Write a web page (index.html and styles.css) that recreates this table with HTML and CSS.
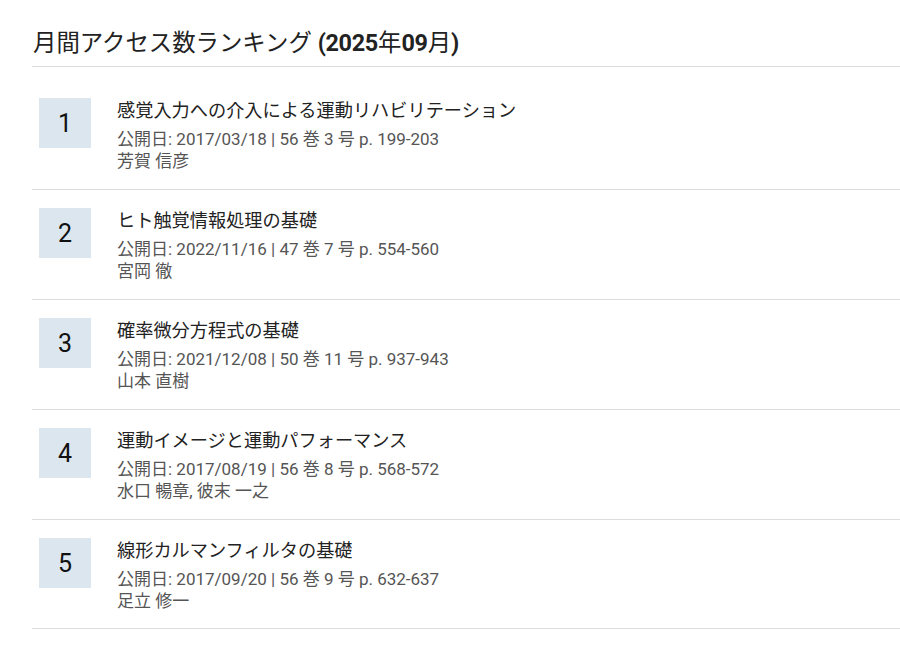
FILE: index.html
```html
<!DOCTYPE html>
<html lang="ja">
<head>
<meta charset="utf-8">
<link rel="stylesheet" href="styles.css">
</head>
<body>
<div class="page">
  <h2 class="heading">月間アクセス数ランキング <span class="b">(2025</span>年<span class="b">09</span>月<span class="b">)</span></h2>
  <ul class="ranking">
    <li class="item">
      <div class="rank">1</div>
      <div class="info">
        <div class="title">感覚入力への介入による運動リハビリテーション</div>
        <div class="meta">公開日: 2017/03/18 | 56 巻 3 号 p. 199-203</div>
        <div class="author">芳賀 信彦</div>
      </div>
    </li>
    <li class="item">
      <div class="rank">2</div>
      <div class="info">
        <div class="title">ヒト触覚情報処理の基礎</div>
        <div class="meta">公開日: 2022/11/16 | 47 巻 7 号 p. 554-560</div>
        <div class="author">宮岡 徹</div>
      </div>
    </li>
    <li class="item">
      <div class="rank">3</div>
      <div class="info">
        <div class="title">確率微分方程式の基礎</div>
        <div class="meta">公開日: 2021/12/08 | 50 巻 11 号 p. 937-943</div>
        <div class="author">山本 直樹</div>
      </div>
    </li>
    <li class="item">
      <div class="rank">4</div>
      <div class="info">
        <div class="title">運動イメージと運動パフォーマンス</div>
        <div class="meta">公開日: 2017/08/19 | 56 巻 8 号 p. 568-572</div>
        <div class="author">水口 暢章, 彼末 一之</div>
      </div>
    </li>
    <li class="item">
      <div class="rank">5</div>
      <div class="info">
        <div class="title">線形カルマンフィルタの基礎</div>
        <div class="meta">公開日: 2017/09/20 | 56 巻 9 号 p. 632-637</div>
        <div class="author">足立 修一</div>
      </div>
    </li>
  </ul>
</div>
</body>
</html>
```

FILE: styles.css
```css
html, body {
  margin: 0;
  padding: 0;
  background: #fff;
}
body {
  font-family: Roboto, "Noto Sans CJK JP", sans-serif;
  color: #222;
}
.page {
  padding: 0 0 0 32px;
}
.heading {
  margin: 0;
  padding: 28px 0 8px 1px;
  font-size: 23.4px;
  line-height: 30px;
  font-weight: 400;
  color: #222;
  border-bottom: 1px solid #dddddd;
}
.heading .b {
  font-weight: 700;
  letter-spacing: -0.3px;
}
.ranking {
  list-style: none;
  margin: 13px 0 0 0;
  padding: 0;
}
.item {
  display: flex;
  align-items: flex-start;
  padding: 18px 0 17px 7px;
  border-bottom: 1px solid #dddddd;
}
.item:last-child {
  padding-bottom: 16px;
}
.rank {
  flex: 0 0 auto;
  width: 52px;
  height: 50px;
  background: #dce6ef;
  display: flex;
  align-items: center;
  justify-content: center;
  font-size: 25px;
  color: #111;
}
.info {
  margin-left: 26px;
}
.title {
  font-size: 18.2px;
  line-height: 26px;
  color: #222;
  margin-bottom: 4px;
}
.meta {
  font-size: 17px;
  line-height: 22px;
  color: #555;
}
.author {
  font-size: 17px;
  line-height: 22px;
  color: #555;
}
```
